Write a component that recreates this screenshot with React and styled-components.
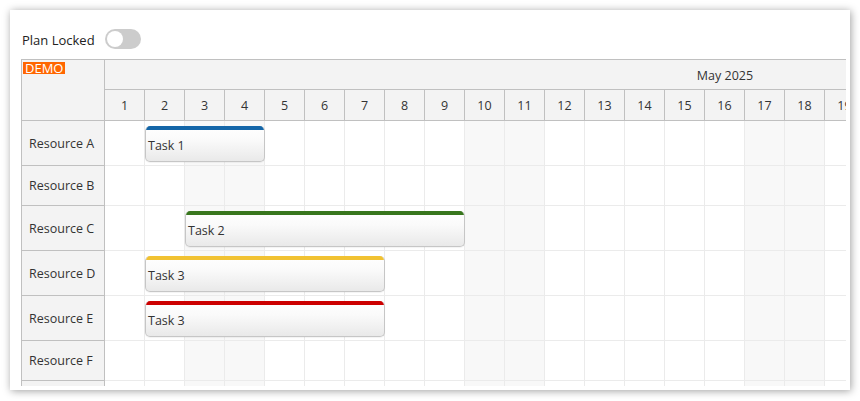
import React from "react";
import styled, { createGlobalStyle } from "styled-components";

const Global = createGlobalStyle`
  html, body { margin: 0; padding: 0; background: #fff; }
  body { font-family: "Open Sans", "Noto Sans", sans-serif; color: #333; }
  * { box-sizing: border-box; }
`;

const DAY_W = 40;
const DAYS = 31;
const WEEKENDS = new Set([3, 4, 10, 11, 17, 18, 24, 25, 31]);

const resources = [
  { name: "Resource A", height: 45, event: { text: "Task 1", start: 2, len: 3, color: "#1466a8" } },
  { name: "Resource B", height: 40 },
  { name: "Resource C", height: 45, event: { text: "Task 2", start: 3, len: 7, color: "#38761d" } },
  { name: "Resource D", height: 45, event: { text: "Task 3", start: 2, len: 6, color: "#f1c232" } },
  { name: "Resource E", height: 45, event: { text: "Task 3", start: 2, len: 6, color: "#cc0000" } },
  { name: "Resource F", height: 40 },
  { name: "Resource G", height: 40 },
];

const Card = styled.div`
  margin: 10px;
  width: 840px;
  height: 380px;
  padding: 19px 4px 4px 11px;
  background: #fff;
  box-shadow: 1px 1px 8px rgba(0, 0, 0, 0.38);
  overflow: hidden;
  display: flex;
  flex-direction: column;
  gap: 10px;
`;

const Toolbar = styled.div`
  display: flex;
  align-items: center;
  gap: 10px;
  height: 20px;
  font-size: 13px;
  color: #222;
`;

const Label = styled.span`
  padding: 2px 0 0 1px;
`;

const Track = styled.div`
  width: 36px;
  height: 20px;
  border-radius: 10px;
  background: #cccccc;
  padding: 2px;
  display: flex;
  justify-content: ${(p) => (p.$on ? "flex-end" : "flex-start")};
`;

const Knob = styled.div`
  width: 16px;
  height: 16px;
  border-radius: 50%;
  background: #fff;
`;

const Scheduler = styled.div`
  height: 327px;
  overflow: hidden;
  display: grid;
  grid-template-columns: 83px 1fr;
  border-top: 1px solid #c0c0c0;
  border-left: 1px solid #c0c0c0;
  font-size: 12.5px;
  color: #333;
`;

const RowHeaders = styled.div`
  display: flex;
  flex-direction: column;
  background: #f3f3f3;
  border-right: 1px solid #c0c0c0;
`;

const Corner = styled.div`
  height: 61px;
  flex: none;
  border-bottom: 1px solid #c0c0c0;
  padding: 0 0 0 1px;
`;

const Demo = styled.span`
  display: inline-block;
  background: #ff6600;
  color: #fff;
  font-size: 13px;
  line-height: 12px;
  height: 12px;
  padding: 0 2px 0 2px;
`;

const RowHeader = styled.div`
  flex: none;
  height: ${(p) => p.$h}px;
  border-bottom: 1px solid #c0c0c0;
  display: flex;
  align-items: center;
  padding-left: 7px;
  white-space: nowrap;
`;

const Timeline = styled.div`
  overflow: hidden;
  min-width: 0;
`;

const Inner = styled.div`
  width: ${DAY_W * DAYS}px;
  display: flex;
  flex-direction: column;
`;

const MonthRow = styled.div`
  height: 30px;
  flex: none;
  background: #f3f3f3;
  border-bottom: 1px solid #c0c0c0;
  display: flex;
  align-items: center;
  justify-content: center;
  padding-top: 2px;
`;

const DayRow = styled.div`
  height: 31px;
  flex: none;
  display: grid;
  grid-template-columns: repeat(${DAYS}, ${DAY_W}px);
  background: #f3f3f3;
  border-bottom: 1px solid #c0c0c0;
`;

const DayCell = styled.div`
  border-right: 1px solid #c0c0c0;
  display: flex;
  align-items: center;
  justify-content: center;
`;

const Row = styled.div`
  height: ${(p) => p.$h}px;
  flex: none;
  display: grid;
  grid-template-columns: repeat(${DAYS}, ${DAY_W}px);
  grid-template-rows: 1fr;
`;

const Cell = styled.div`
  grid-row: 1;
  grid-column: ${(p) => p.$col};
  background: ${(p) => (p.$weekend ? "#f8f8f8" : "#ffffff")};
  border-right: 1px solid #ebebeb;
  border-bottom: 1px solid #ebebeb;
`;

const Bar = styled.div`
  grid-row: 1;
  grid-column: ${(p) => p.$start} / span ${(p) => p.$len};
  margin: 5px 0 4px 0;
  z-index: 1;
  border-radius: 5px;
  border: 1px solid #c6c6c6;
  border-top: none;
  overflow: hidden;
  display: flex;
  flex-direction: column;
  background: linear-gradient(to bottom, #ffffff 0%, #fafafa 40%, #e9e9e9 100%);
  box-shadow: 0 1px 1px rgba(0, 0, 0, 0.05);
`;

const Strip = styled.div`
  height: 4px;
  flex: none;
  background: ${(p) => p.$color};
  margin: 0 -1px;
`;

const BarText = styled.div`
  flex: 1;
  display: flex;
  align-items: center;
  padding: 0 0 1px 2px;
  color: #333;
  font-size: 12.5px;
  white-space: nowrap;
`;

export default function App() {
  const days = Array.from({ length: DAYS }, (_, i) => i + 1);
  return (
    <>
      <Global />
      <Card>
        <Toolbar>
          <Label>Plan Locked</Label>
          <Track>
            <Knob />
          </Track>
        </Toolbar>
        <Scheduler>
          <RowHeaders>
            <Corner>
              <Demo>DEMO</Demo>
            </Corner>
            {resources.map((r) => (
              <RowHeader key={r.name} $h={r.height}>
                {r.name}
              </RowHeader>
            ))}
          </RowHeaders>
          <Timeline>
            <Inner>
              <MonthRow>May 2025</MonthRow>
              <DayRow>
                {days.map((d) => (
                  <DayCell key={d}>{d}</DayCell>
                ))}
              </DayRow>
              {resources.map((r) => (
                <Row key={r.name} $h={r.height}>
                  {days.map((d) => (
                    <Cell key={d} $col={d} $weekend={WEEKENDS.has(d)} />
                  ))}
                  {r.event && (
                    <Bar $start={r.event.start} $len={r.event.len}>
                      <Strip $color={r.event.color} />
                      <BarText>{r.event.text}</BarText>
                    </Bar>
                  )}
                </Row>
              ))}
            </Inner>
          </Timeline>
        </Scheduler>
      </Card>
    </>
  );
}
